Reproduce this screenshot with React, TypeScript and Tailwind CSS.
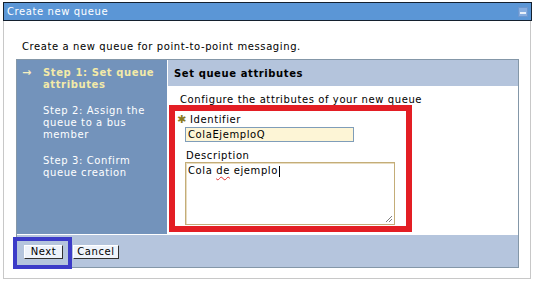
import React from "react";

export default function App() {
  return (
    <div
      className="relative w-[535px] h-[282px] bg-white text-[10px] tracking-[0.6px] text-black overflow-hidden"
      style={{ fontFamily: '"DejaVu Sans", Verdana, sans-serif' }}
    >
      <div className="pt-[2px] pl-[3px]">
        {/* Title bar */}
        <div className="w-[529px] h-[19px] bg-[#5b96d6] border border-[#14202e] flex items-center justify-between pl-[3px] pr-[3px]">
          <span className="text-white leading-[12px]">Create new queue</span>
          <div className="w-[10px] h-[10px] bg-[#86ade0] border border-[#6d97cf] flex items-end justify-center pb-[2px]">
            <div className="w-[6px] h-[2px] bg-[#e8f0fa]" />
          </div>
        </div>
        {/* Frame */}
        <div className="w-[528px] h-[258px] border-l border-r border-b border-[#c8c8c8]">
          <div className="pt-[20px] pl-[18px] leading-[12px]">
            Create a new queue for point-to-point messaging.
          </div>
          {/* Wizard */}
          <div className="mt-[6px] ml-[12px] w-[503px] h-[209px] border border-[#8497a8] flex flex-col bg-white">
            <div className="flex h-[174px]">
              {/* Nav */}
              <div className="w-[150px] bg-[#7393bb] pt-[7px] text-white leading-[12px]">
                <div className="flex">
                  <span className="w-[26px] pl-[5px] text-[#f5efc0] font-bold text-[11px] leading-[12px]">→</span>
                  <span className="font-bold text-[#f3eaa8]">
                    Step 1: Set queue
                    <br />
                    attributes
                  </span>
                </div>
                <div className="pl-[26px] mt-[14px]">
                  Step 2: Assign the
                  <br />
                  queue to a bus
                  <br />
                  member
                </div>
                <div className="pl-[26px] mt-[14px]">
                  Step 3: Confirm
                  <br />
                  queue creation
                </div>
              </div>
              {/* Content */}
              <div className="flex-1 ml-[1px] flex flex-col">
                <div className="h-[26px] bg-[#b4c4dc] flex items-center pl-[6px] font-bold">
                  Set queue attributes
                </div>
                <div className="pt-[8px] pl-[12px] leading-[12px]">
                  Configure the attributes of your new queue
                </div>
                <div className="mt-[-1px] ml-[1px] w-[243px] h-[127px] border-[6px] border-[#e31e24] flex flex-col">
                  <div className="pt-[3px] pl-[2px] flex items-center leading-[12px]">
                    <span className="text-[#8a7a1e] w-[13px] text-[11px]">✱</span>
                    <span>Identifier</span>
                  </div>
                  <div className="mt-[1px] ml-[10px] w-[169px] h-[15px] bg-[#fdf5d6] border border-[#7f9db9] flex items-center pl-[2px] leading-[12px]">
                    ColaEjemploQ
                  </div>
                  <div className="mt-[8px] ml-[11px] leading-[12px]">Description</div>
                  <div className="relative ml-[10px] w-[210px] h-[63px] bg-white border border-[#c4ad78] shadow-[inset_1px_1px_0_#e8dcc0] pl-[2px] pt-[2px] leading-[12px]">
                    <span>Cola </span>
                    <span className="underline decoration-wavy decoration-[#e03030] decoration-1 underline-offset-2">de</span>
                    <span> ejemplo</span>
                    <span className="inline-block w-[1px] h-[11px] bg-black align-middle ml-[1px]" />
                    <svg className="absolute right-[1px] bottom-[1px]" width="9" height="9" viewBox="0 0 9 9">
                      <line x1="8" y1="2" x2="2" y2="8" stroke="#808080" strokeWidth="1" />
                      <line x1="8" y1="5" x2="5" y2="8" stroke="#808080" strokeWidth="1" />
                    </svg>
                  </div>
                </div>
              </div>
            </div>
            {/* Bottom bar */}
            <div className="flex-1 border-t border-white bg-[#b5c5dd] pl-[7px] pt-[10px] flex gap-[10px] items-start">
              <div className="w-[39px] h-[14px] bg-[#eef3fb] border-t border-l border-[#ffffff] border-r border-b border-r-[#303030] border-b-[#303030] flex items-center justify-center leading-[12px]">
                Next
              </div>
              <div className="w-[46px] h-[14px] bg-[#eef3fb] border-t border-l border-[#ffffff] border-r border-b border-r-[#303030] border-b-[#303030] flex items-center justify-center leading-[12px]">
                Cancel
              </div>
            </div>
          </div>
        </div>
      </div>
      {/* Blue highlight overlay */}
      <div className="absolute left-[13px] top-[237px] w-[59px] h-[32px] border-[4px] border-[#3c3cc8]" />
    </div>
  );
}
